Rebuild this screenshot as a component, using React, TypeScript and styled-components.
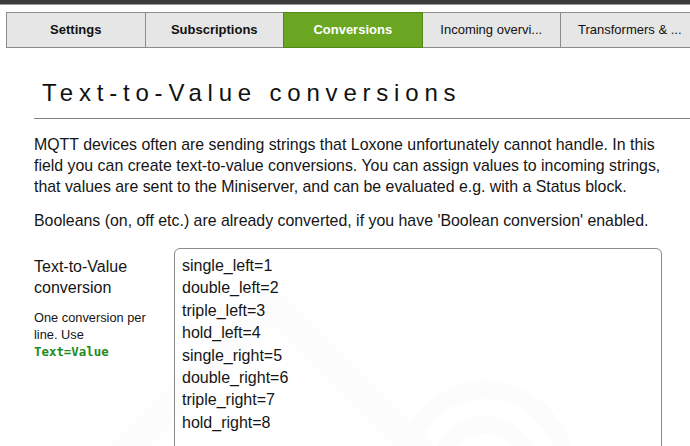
import React from "react";
import styled, { createGlobalStyle } from "styled-components";

const Global = createGlobalStyle`
  html, body { margin: 0; padding: 0; background: #ffffff; }
  body { font-family: "Liberation Sans", Arial, sans-serif; color: #111; overflow: hidden; }
`;

const Page = styled.div`
  position: relative;
  width: 690px;
  height: 446px;
  overflow: hidden;
`;

const Watermark = styled.svg`
  position: absolute;
  left: 0;
  top: 0;
  width: 690px;
  height: 446px;
  z-index: 0;
  pointer-events: none;
`;

const TopBar = styled.div`
  height: 4px;
  background: #3b3b3b;
  border-bottom: 1px solid #9a9a9a;
`;

const Tabs = styled.nav`
  display: flex;
  padding: 7px 0 0 6px;
  position: relative;
  z-index: 1;
`;

const Tab = styled.div<{ $active?: boolean; $bold?: boolean }>`
  flex: 0 0 139.5px;
  box-sizing: border-box;
  height: 36px;
  margin-left: -1px;
  &:first-child { margin-left: 0; }
  display: flex;
  align-items: center;
  justify-content: center;
  padding: 0 8px 1px;
  border: 1px solid ${(p) => (p.$active ? "#4f8a17" : "#8c8c8c")};
  background: ${(p) => (p.$active ? "#6aa622" : "#e6e6e6")};
  color: ${(p) => (p.$active ? "#ffffff" : "#111")};
  font-size: 13px;
  font-weight: ${(p) => (p.$bold ? 700 : 400)};
  white-space: nowrap;
  overflow: hidden;
  position: relative;
  z-index: ${(p) => (p.$active ? 2 : 1)};
`;

const Content = styled.main`
  position: relative;
  z-index: 1;
  padding: 0 0 0 34px;
`;

const Title = styled.h1`
  margin: 31px 0 0 0;
  padding: 0 0 11px 8px;
  border-bottom: 1px solid #808080;
  font-size: 24px;
  font-weight: 400;
  letter-spacing: 5.8px;
  line-height: 28px;
  color: #111;
  white-space: nowrap;
`;

const Para = styled.p<{ $first?: boolean }>`
  margin: ${(p) => (p.$first ? "15px" : "13px")} 0 0 0;
  font-size: 15.9px;
  line-height: 21px;
  color: #151515;
  padding-right: 20px;
`;

const FormRow = styled.div`
  display: flex;
  margin-top: 17px;
  align-items: flex-start;
`;

const LabelCol = styled.div`
  flex: 0 0 140px;
  padding-top: 8px;
`;

const Label = styled.label`
  display: block;
  font-size: 16px;
  line-height: 21px;
  color: #151515;
`;

const Help = styled.div`
  margin-top: 11px;
  max-width: 122px;
  font-size: 12.8px;
  line-height: 17px;
  color: #151515;
`;

const Code = styled.code`
  font-family: "DejaVu Sans Mono", "Liberation Mono", monospace;
  font-weight: 700;
  font-size: 12.4px;
  color: #1f8a1f;
`;

const TextArea = styled.textarea`
  flex: 0 0 488px;
  box-sizing: border-box;
  height: 230px;
  margin: 0;
  padding: 6px 7px;
  border: 1px solid #8a8a8a;
  border-radius: 6px;
  background: transparent;
  font-family: "Liberation Sans", Arial, sans-serif;
  font-size: 16px;
  line-height: 22.4px;
  color: #151515;
  resize: none;
  outline: none;
`;

const conversions = [
  "single_left=1",
  "double_left=2",
  "triple_left=3",
  "hold_left=4",
  "single_right=5",
  "double_right=6",
  "triple_right=7",
  "hold_right=8",
].join("\n");

export default function App() {
  return (
    <Page>
      <Global />
      <Watermark viewBox="0 0 690 446">
        <path
          d="M272 284 L470 482 L430 482 L272 324 L114 482 L74 482 Z"
          fill="#fcfcfc"
        />
        <g fill="none" stroke="#fcfcfc" strokeWidth="18">
          <path d="M440 470 A 45 45 0 0 1 530 470" />
          <path d="M405 470 A 80 80 0 0 1 565 470" />
        </g>
      </Watermark>
      <TopBar />
      <Tabs>
        <Tab $bold>Settings</Tab>
        <Tab $bold>Subscriptions</Tab>
        <Tab $bold $active>Conversions</Tab>
        <Tab>Incoming overvi...</Tab>
        <Tab>Transformers &amp; ...</Tab>
      </Tabs>
      <Content>
        <Title>Text-to-Value conversions</Title>
        <Para $first>
          MQTT devices often are sending strings that Loxone unfortunately cannot handle. In this
          field you can create text-to-value conversions. You can assign values to incoming strings,
          that values are sent to the Miniserver, and can be evaluated e.g. with a Status block.
        </Para>
        <Para>
          Booleans (on, off etc.) are already converted, if you have 'Boolean conversion' enabled.
        </Para>
        <FormRow>
          <LabelCol>
            <Label htmlFor="conv">Text-to-Value conversion</Label>
            <Help>
              One conversion per line. Use <Code>Text=Value</Code>
            </Help>
          </LabelCol>
          <TextArea id="conv" defaultValue={conversions} spellCheck={false} />
        </FormRow>
      </Content>
    </Page>
  );
}
